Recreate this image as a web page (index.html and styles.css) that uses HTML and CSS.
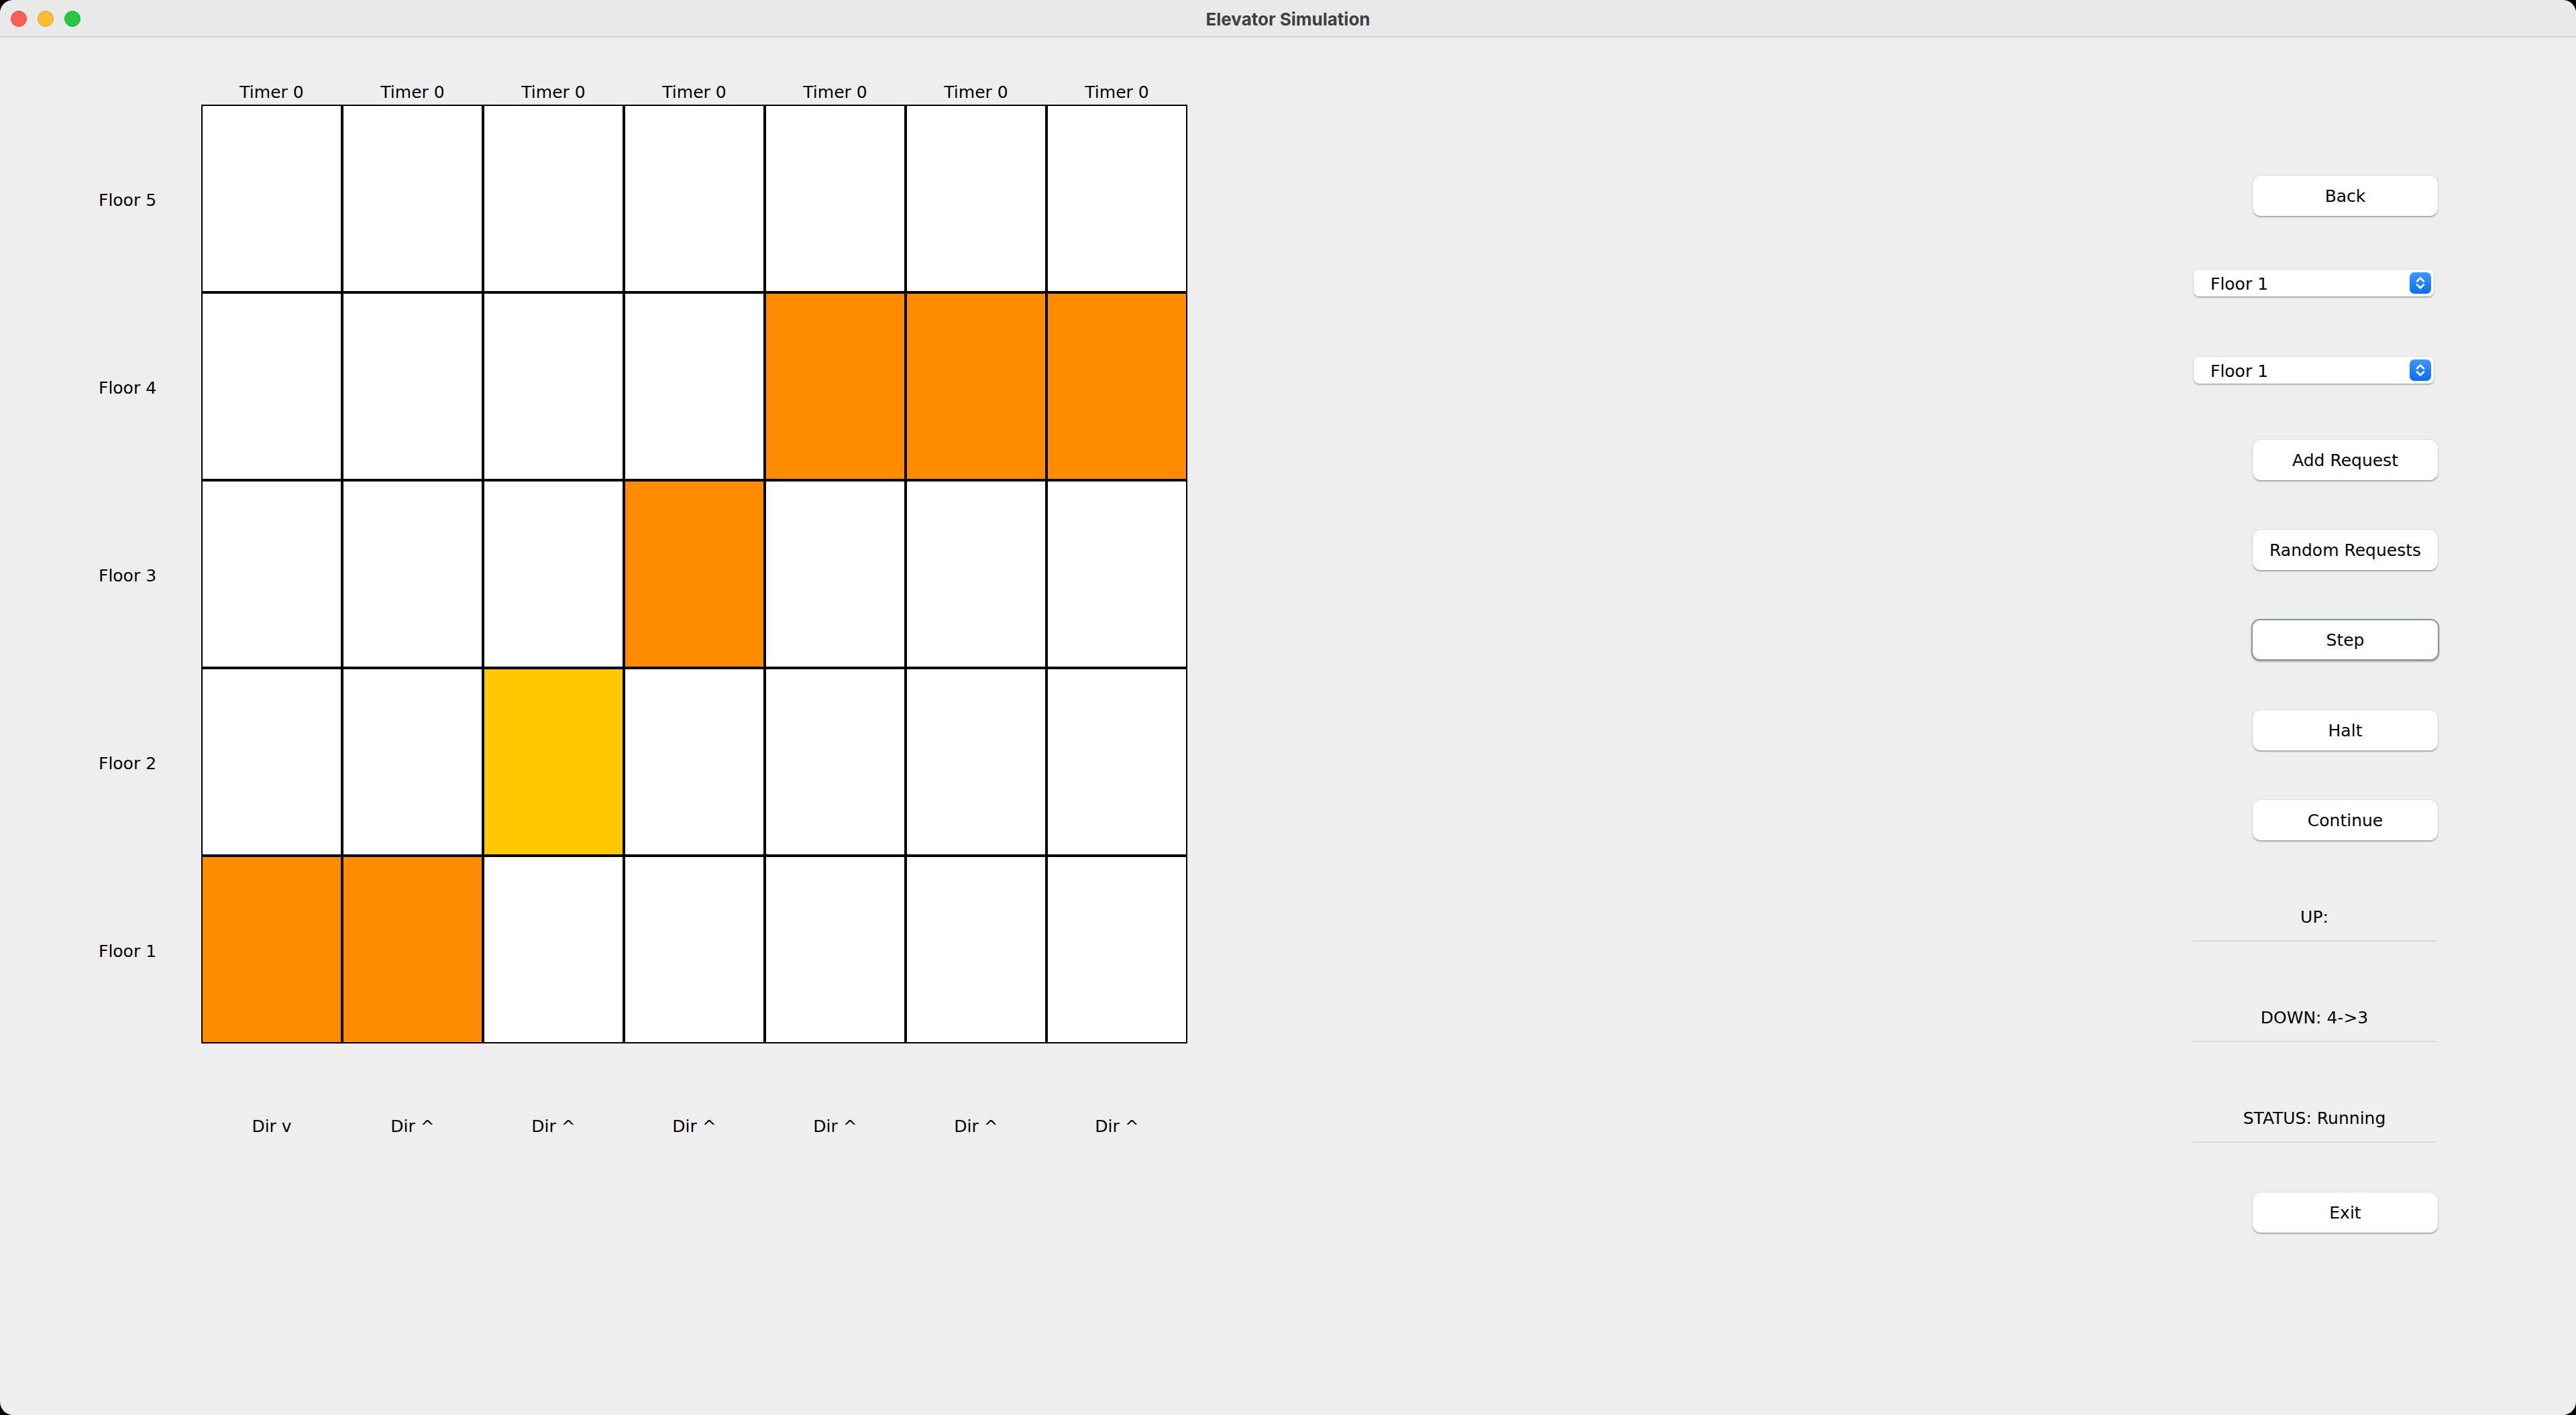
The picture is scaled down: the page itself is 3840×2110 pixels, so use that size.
FILE: index.html
```html
<!DOCTYPE html>
<html lang="en">
<head>
<meta charset="utf-8">
<title>Elevator Simulation</title>
<link rel="stylesheet" href="styles.css">
</head>
<body>
<div class="window">
  <header class="titlebar">
    <div class="lights">
      <span class="light red"></span>
      <span class="light yellow"></span>
      <span class="light green"></span>
    </div>
    <div class="title">Elevator Simulation</div>
    <div></div>
  </header>
  <main class="main">
    <section class="board">
      <div class="blank"></div>
      <div class="timer">Timer 0</div>
      <div class="timer">Timer 0</div>
      <div class="timer">Timer 0</div>
      <div class="timer">Timer 0</div>
      <div class="timer">Timer 0</div>
      <div class="timer">Timer 0</div>
      <div class="timer">Timer 0</div>

      <div class="floor">Floor 5</div>
      <div class="cell"></div><div class="cell"></div><div class="cell"></div><div class="cell"></div><div class="cell"></div><div class="cell"></div><div class="cell"></div>

      <div class="floor">Floor 4</div>
      <div class="cell"></div><div class="cell"></div><div class="cell"></div><div class="cell"></div><div class="cell busy"></div><div class="cell busy"></div><div class="cell busy"></div>

      <div class="floor">Floor 3</div>
      <div class="cell"></div><div class="cell"></div><div class="cell"></div><div class="cell busy"></div><div class="cell"></div><div class="cell"></div><div class="cell"></div>

      <div class="floor">Floor 2</div>
      <div class="cell"></div><div class="cell"></div><div class="cell open"></div><div class="cell"></div><div class="cell"></div><div class="cell"></div><div class="cell"></div>

      <div class="floor">Floor 1</div>
      <div class="cell busy"></div><div class="cell busy"></div><div class="cell"></div><div class="cell"></div><div class="cell"></div><div class="cell"></div><div class="cell"></div>

      <div class="blank"></div>
      <div class="dir">Dir v</div>
      <div class="dir">Dir ^</div>
      <div class="dir">Dir ^</div>
      <div class="dir">Dir ^</div>
      <div class="dir">Dir ^</div>
      <div class="dir">Dir ^</div>
      <div class="dir">Dir ^</div>
    </section>

    <aside class="controls">
      <button class="btn">Back</button>
      <div class="combo combo-first"><span class="combo-text">Floor 1</span>
        <span class="arrows"><svg width="32" height="32" viewBox="0 0 32 32"><path d="M11 13.5 L16 8.5 L21 13.5 M11 18.5 L16 23.5 L21 18.5" fill="none" stroke="#fff" stroke-width="2.6" stroke-linecap="round" stroke-linejoin="round"/></svg></span>
      </div>
      <div class="combo combo-second"><span class="combo-text">Floor 1</span>
        <span class="arrows"><svg width="32" height="32" viewBox="0 0 32 32"><path d="M11 13.5 L16 8.5 L21 13.5 M11 18.5 L16 23.5 L21 18.5" fill="none" stroke="#fff" stroke-width="2.6" stroke-linecap="round" stroke-linejoin="round"/></svg></span>
      </div>
      <button class="btn add">Add Request</button>
      <button class="btn next">Random Requests</button>
      <button class="btn next step">Step</button>
      <button class="btn next">Halt</button>
      <button class="btn next">Continue</button>
      <div class="info info-first">UP:</div>
      <div class="info">DOWN: 4-&gt;3</div>
      <div class="info">STATUS: Running</div>
      <button class="btn next">Exit</button>
    </aside>
  </main>
</div>
</body>
</html>
```

FILE: styles.css
```css
html, body {
  margin: 0;
  padding: 0;
  background: #000;
}

.window {
  width: 3840px;
  height: 2110px;
  border-radius: 20px;
  overflow: hidden;
  background: #eeeeee;
  font-family: "DejaVu Sans", "Liberation Sans", sans-serif;
  font-size: 25px;
  color: #000;
}

.titlebar {
  height: 54px;
  border-bottom: 2px solid #d3d3d3;
  background: #e9e9e9;
  display: grid;
  grid-template-columns: 1fr auto 1fr;
  align-items: center;
}

.lights {
  display: flex;
  gap: 16px;
  padding-left: 16px;
  padding-top: 2px;
}

.light {
  width: 22px;
  height: 22px;
  border-radius: 50%;
  border: 1px solid transparent;
}

.red { background: #ff5f57; border-color: #e1473f; }
.yellow { background: #febc2e; border-color: #dfa02a; }
.green { background: #28c840; border-color: #1fab32; }

.title {
  font-family: "Inter", "Liberation Sans", sans-serif;
  font-weight: 700;
  font-size: 26px;
  color: #3f3f3f;
  padding-top: 2px;
}

.main {
  display: flex;
  padding-right: 202px;
}

.board {
  display: grid;
  grid-template-columns: 153px repeat(7, 210px);
  grid-template-rows: 36px repeat(5, 280px) auto;
  padding-left: 147px;
  padding-top: 64px;
}

.timer {
  text-align: center;
  line-height: 36px;
  white-space: nowrap;
}

.floor {
  display: flex;
  align-items: center;
  line-height: 28px;
  padding-top: 5px;
  white-space: nowrap;
}

.cell {
  box-sizing: border-box;
  width: 210px;
  height: 280px;
  border: 2px solid #000;
  background: #ffffff;
}

.cell.busy { background: #ff8c00; }
.cell.open { background: #ffc800; }

.dir {
  text-align: center;
  line-height: 28px;
  padding-top: 110px;
  white-space: nowrap;
}

.controls {
  margin-left: auto;
  width: 370px;
  display: flex;
  flex-direction: column;
  align-items: flex-start;
  padding-top: 206px;
}

.btn {
  box-sizing: border-box;
  width: 276px;
  height: 60px;
  margin-left: 90px;
  border: none;
  border-radius: 12px;
  background: #ffffff;
  box-shadow: 0 0 0 1px rgba(0, 0, 0, 0.05), 0 1.5px 2px rgba(0, 0, 0, 0.28);
  font-family: "DejaVu Sans", "Liberation Sans", sans-serif;
  font-size: 25px;
  color: #000;
  padding: 0;
}

.btn.add { margin-top: 84px; }
.btn.next { margin-top: 74px; }

.btn.step {
  width: 280px;
  height: 62px;
  margin-left: 88px;
  margin-top: 73px;
  border: 2px solid #8596ad;
  border-radius: 13px;
}

.combo {
  box-sizing: border-box;
  width: 358px;
  height: 40px;
  margin-left: 2px;
  border-radius: 8px;
  background: #ffffff;
  box-shadow: 0 0 0 1px rgba(0, 0, 0, 0.05), 0 1.5px 2px rgba(0, 0, 0, 0.25);
  display: flex;
  align-items: center;
  justify-content: space-between;
  padding-left: 25px;
  padding-right: 4px;
  line-height: 28px;
}

.combo-text {
  padding-top: 3px;
}

.combo-first { margin-top: 80px; }
.combo-second { margin-top: 90px; }

.arrows {
  width: 32px;
  height: 32px;
  border-radius: 7px;
  background: linear-gradient(#3d97fc, #0b6df4);
  display: flex;
}

.info {
  box-sizing: border-box;
  width: 364px;
  height: 75px;
  margin-top: 75px;
  background: #efefef;
  border-bottom: 2px solid #dadada;
  display: flex;
  align-items: center;
  justify-content: center;
  padding-left: 0;
  padding-top: 4px;
  line-height: 28px;
  white-space: nowrap;
}

.info-first { margin-top: 76px; }
```
